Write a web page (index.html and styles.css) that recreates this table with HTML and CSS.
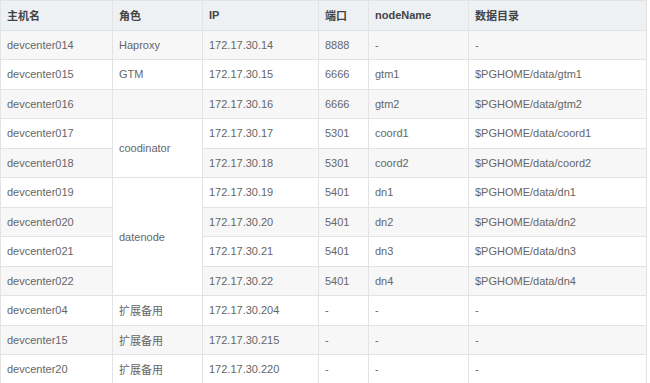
FILE: index.html
```html
<!DOCTYPE html>
<html lang="en">
<head>
    <meta charset="UTF-8">
    <title>节点规划</title>
    <link rel="stylesheet" href="styles.css">
</head>
<body>
    <table class="node-table">
        <colgroup>
            <col class="col-host">
            <col class="col-role">
            <col class="col-ip">
            <col class="col-port">
            <col class="col-node">
            <col class="col-dir">
        </colgroup>
        <thead>
            <tr>
                <th>主机名</th>
                <th>角色</th>
                <th>IP</th>
                <th>端口</th>
                <th>nodeName</th>
                <th>数据目录</th>
            </tr>
        </thead>
        <tbody>
            <tr>
                <td>devcenter014</td>
                <td>Haproxy</td>
                <td>172.17.30.14</td>
                <td>8888</td>
                <td>-</td>
                <td>-</td>
            </tr>
            <tr>
                <td>devcenter015</td>
                <td>GTM</td>
                <td>172.17.30.15</td>
                <td>6666</td>
                <td>gtm1</td>
                <td>$PGHOME/data/gtm1</td>
            </tr>
            <tr>
                <td>devcenter016</td>
                <td></td>
                <td>172.17.30.16</td>
                <td>6666</td>
                <td>gtm2</td>
                <td>$PGHOME/data/gtm2</td>
            </tr>
            <tr>
                <td>devcenter017</td>
                <td class="merged" rowspan="2">coodinator</td>
                <td>172.17.30.17</td>
                <td>5301</td>
                <td>coord1</td>
                <td>$PGHOME/data/coord1</td>
            </tr>
            <tr>
                <td>devcenter018</td>
                <td>172.17.30.18</td>
                <td>5301</td>
                <td>coord2</td>
                <td>$PGHOME/data/coord2</td>
            </tr>
            <tr>
                <td>devcenter019</td>
                <td class="merged" rowspan="4">datenode</td>
                <td>172.17.30.19</td>
                <td>5401</td>
                <td>dn1</td>
                <td>$PGHOME/data/dn1</td>
            </tr>
            <tr>
                <td>devcenter020</td>
                <td>172.17.30.20</td>
                <td>5401</td>
                <td>dn2</td>
                <td>$PGHOME/data/dn2</td>
            </tr>
            <tr>
                <td>devcenter021</td>
                <td>172.17.30.21</td>
                <td>5401</td>
                <td>dn3</td>
                <td>$PGHOME/data/dn3</td>
            </tr>
            <tr>
                <td>devcenter022</td>
                <td>172.17.30.22</td>
                <td>5401</td>
                <td>dn4</td>
                <td>$PGHOME/data/dn4</td>
            </tr>
            <tr>
                <td>devcenter04</td>
                <td>扩展备用</td>
                <td>172.17.30.204</td>
                <td>-</td>
                <td>-</td>
                <td>-</td>
            </tr>
            <tr>
                <td>devcenter15</td>
                <td>扩展备用</td>
                <td>172.17.30.215</td>
                <td>-</td>
                <td>-</td>
                <td>-</td>
            </tr>
            <tr>
                <td>devcenter20</td>
                <td>扩展备用</td>
                <td>172.17.30.220</td>
                <td>-</td>
                <td>-</td>
                <td>-</td>
            </tr>
        </tbody>
    </table>
</body>
</html>
```

FILE: styles.css
```css
body {
    margin: 0;
    background: #fff;
    font-family: "Liberation Sans", Arial, "Noto Sans CJK SC", sans-serif;
    font-size: 11px;
    color: #666;
}

.node-table {
    border-collapse: collapse;
    table-layout: fixed;
    width: 646px;
}

.col-host { width: 112px; }
.col-role { width: 90px; }
.col-ip { width: 116px; }
.col-port { width: 50px; }
.col-node { width: 100px; }
.col-dir { width: 178px; }

.node-table tr {
    height: 29.5px;
}

.node-table th,
.node-table td {
    border: 1px solid #e3e3e3;
    padding: 0 6px;
    text-align: left;
    vertical-align: middle;
    white-space: nowrap;
}

.node-table th {
    background: #eef1f4;
    color: #444;
    font-weight: bold;
}

.node-table tbody tr:nth-child(odd) td {
    background: #f7f7f7;
}

.node-table tbody tr td.merged {
    background: #fff;
}
```
